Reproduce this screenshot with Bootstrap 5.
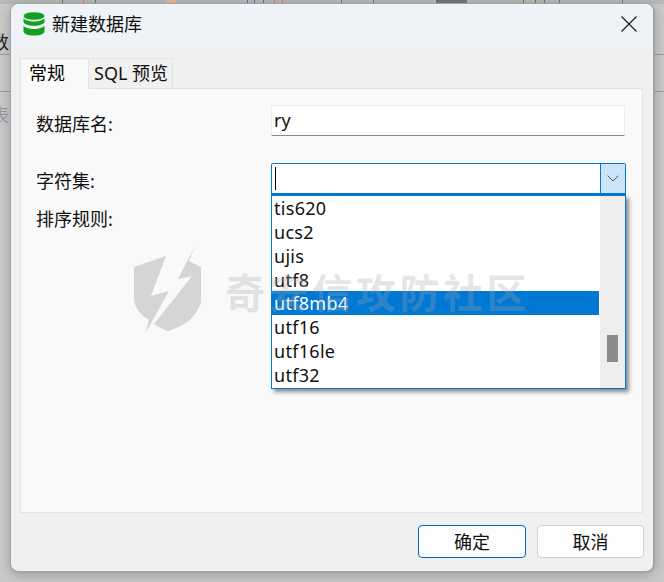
<!DOCTYPE html>
<html lang="zh-CN">
<head>
<meta charset="UTF-8" />
<meta name="viewport" content="width=device-width, initial-scale=1" />
<title>新建数据库</title>
<link href="https://cdn.jsdelivr.net/npm/bootstrap@5.3.0/dist/css/bootstrap.min.css" rel="stylesheet" />
<style>
html, body { height: 582px; overflow: hidden; }
body {
  width: 664px;
  background: #c9c9c9;
  font-family: "Noto Sans", "Noto Sans CJK SC", sans-serif;
  font-size: 18px;
  line-height: 24px;
  color: #111;
  position: relative;
}
/* what shows of the app behind the dialog */
.behind { position: absolute; inset: 0; overflow: hidden; }
.behind i { position: absolute; display: block; }
.behind .topband { left: 0; right: 0; top: 0; height: 4px; background: #b9b9b9; }
.behind .hline { height: 1px; background: #9b9b9b; }
.behind .tick { top: 0; width: 1px; height: 3px; }
.behind .ghost { font-style: normal; left: -9px; font-size: 18px; }

.dlg {
  position: relative;
  width: 645px;
  height: 570px;
  margin: 3px 0 0 10px;
  background: #f0f0f0;
  border: 1px solid #a3a3a3;
  border-width: 1px 2px 2px 1px;
  border-radius: 9px;
  box-shadow: 0 2px 12px rgba(0, 0, 0, .22);
  overflow: hidden;
}
.dlg-title { height: 42px; padding: 0 16px 0 12px; background: #eef3f8; }
.dlg-title svg { margin-top: -2px; }
.dlg-title .name { margin: -2px 0 0 7px; }
.dlg-close { margin-left: auto; line-height: 0; }

.tab-wrap { padding: 12px 10px 0 9px; }
.tab-strip { border: 0; height: 31px; }
.tab-strip .nav-link {
  height: 31px;
  padding: 2px 0 0 8px;
  color: #111;
  background: #f0f0f0;
  border: 1px solid #e3e3e3;
  border-radius: 0;
  margin: 0;
}
.tab-strip .nav-link.active {
  width: 69px;
  background: #f9f9f9;
  border-color: #e3e3e3;
  border-bottom-color: #f9f9f9;
  position: relative;
  z-index: 1;
}
.tab-strip .tab-second { width: 84px; padding-left: 5px; margin-left: 0; border-left: 0; }
.tab-pane-box {
  height: 425px;
  margin-top: -1px;
  padding: 16px 17px 0 15px;
  background: #f9f9f9;
  border: 1px solid #e3e3e3;
}
.form-line { display: flex; }
.form-line > label { width: 235px; flex: none; margin: 0; }
.line-name { height: 32px; }
.line-name > label { padding-top: 7px; }
.field { width: 354px; height: 31px; flex: none; }
.field.form-control {
  padding: 0 2px 1px;
  font-size: 18px;
  line-height: 28px;
  color: #111;
  background: #fff;
  border: 1px solid #ececec;
  border-bottom-color: #8a8a8a;
  border-radius: 2px 2px 0 0;
  box-shadow: none;
}
.combo {
  width: 355px;
  height: 32px;
  flex: none;
  background: #fff;
  border: 1px solid #0078d4;
  border-bottom-width: 2px;
  border-radius: 2px 2px 0 0;
}
.combo-caret { width: 1px; height: 23px; margin: 3px 0 0 3px; background: #000; }
.combo-btn {
  margin-left: auto;
  width: 25px;
  background: #cce4f7;
  border-left: 1px solid #0078d4;
}
.line-charset { margin-top: 26px; position: relative; }
.line-charset > label { padding-top: 6px; }
.line-sort { margin-top: 9px; }
.line-sort > label { padding-top: 3px; }

.charset-menu {
  position: absolute;
  top: 32px;
  left: 235px;
  width: 355px;
  height: 194px;
  background: #fff;
  border: 1px solid #0078d4;
  box-shadow: 3px 3px 4px rgba(0, 0, 0, .45);
  z-index: 5;
}
.charset-list { width: 327px; border-radius: 0; }
.charset-list .list-group-item {
  height: 24px;
  padding: 0 2px;
  line-height: 24px;
  font-size: 18px;
  letter-spacing: .3px;
  color: #111;
  background: transparent;
  border: 0;
}
.charset-list .list-group-item.active { background: #0078d4; color: #fff; }
.charset-bar { width: 26px; background: #eeeeee; border-left: 1px solid #fff; padding-top: 139px; }
.charset-thumb { width: 11px; height: 27px; margin-left: 7px; background: #8a8a8a; }

.dlg-foot { padding-top: 12px; padding-right: 9px; }
.foot-btn {
  width: 107px;
  height: 33px;
  padding: 0;
  font-size: 18px;
  line-height: 30px;
  color: #111;
  background: #fdfdfd;
  border: 1px solid #d0d0d0;
  border-radius: 4px;
}
.foot-btn.main { width: 108px; margin-right: 3px; border-color: #0067c0; }

.stamp {
  position: absolute;
  left: 122px;
  top: 239px;
  z-index: 9;
  pointer-events: none;
}
.stamp-text {
  margin: 3px 0 0 20px;
  font-family: "Noto Sans CJK SC", sans-serif;
  font-weight: 700;
  font-size: 40px;
  line-height: 44px;
  letter-spacing: 3.600px;
  color: rgba(165, 165, 165, .28);
  white-space: nowrap;
}
</style>
</head>
<body>
<div class="behind">
  <i class="topband"></i>
  <i class="hline" style="left:0;width:11px;top:54px"></i>
  <i class="hline" style="left:0;width:11px;top:91px"></i>
  <i class="hline" style="left:654px;width:10px;top:54px"></i>
  <i class="hline" style="left:654px;width:10px;top:91px"></i>
  <i class="tick" style="left:62px;background:#3f9a3f"></i>
  <i class="tick" style="left:83px;background:#e0785c"></i>
  <i class="tick" style="left:95px;background:#3f9a3f"></i>
  <i class="tick" style="left:167px;width:9px;background:#e8b9a0"></i>
  <i class="tick" style="left:247px;background:#3b78c8"></i>
  <i class="tick" style="left:254px;background:#3b78c8"></i>
  <i class="tick" style="left:263px;background:#3b78c8"></i>
  <i class="tick" style="left:274px;background:#e0785c"></i>
  <i class="tick" style="left:282px;background:#e0785c"></i>
  <i class="tick" style="left:341px;background:#777"></i>
  <i class="tick" style="left:373px;background:#777"></i>
  <i class="tick" style="left:436px;width:31px;background:#777"></i>
  <i class="tick" style="left:523px;background:#3f9a3f"></i>
  <i class="tick" style="left:535px;background:#3f9a3f"></i>
  <i class="tick" style="left:544px;background:#777"></i>
  <i class="tick" style="left:559px;background:#777"></i>
  <i class="tick" style="left:622px;background:#777"></i>
  <i class="ghost" style="top:30px;color:#222">数</i>
  <i class="ghost" style="top:103px;color:#8f9aa6">表</i>
</div>

<div class="dlg d-flex flex-column">
  <div class="dlg-title d-flex align-items-center">
    <svg width="22" height="24" viewBox="0 0 22 24" aria-hidden="true">
      <g fill="#13a01e">
        <ellipse cx="11" cy="4" rx="10.500" ry="3.800"/>
        <path d="M.5 6.200v3.600c0 2.200 4.700 4 10.500 4s10.500-1.800 10.500-4V6.200c-1.600 2-5.800 3.200-10.500 3.200S2.100 8.200.5 6.200z"/>
        <path d="M.5 13.800v5.700c0 2.300 4.700 4.100 10.500 4.100s10.500-1.800 10.500-4.100v-5.700c-1.600 2-5.800 3.200-10.500 3.200S2.100 15.800.5 13.800z"/>
      </g>
    </svg>
    <span class="name">新建数据库</span>
    <span class="dlg-close">
      <svg width="16" height="16" viewBox="0 0 16 16" aria-hidden="true"><path d="M.5.5l15 15M15.500.5l-15 15" stroke="#1a1a1a" stroke-width="1.200" fill="none"/></svg>
    </span>
  </div>

  <div class="tab-wrap">
    <ul class="nav nav-tabs tab-strip">
      <li class="nav-item"><a class="nav-link active" href="#">常规</a></li>
      <li class="nav-item"><a class="nav-link tab-second" href="#">SQL 预览</a></li>
    </ul>
    <div class="tab-pane-box">
      <div class="form-line line-name">
        <label>数据库名:</label>
        <input class="form-control field" type="text" value="ry" />
      </div>
      <div class="form-line line-charset">
        <label>字符集:</label>
        <div class="combo d-flex">
          <div class="combo-caret"></div>
          <div class="combo-btn d-flex align-items-center justify-content-center">
            <svg width="12" height="7" viewBox="0 0 12 7" aria-hidden="true"><path d="M.7.7L6 6l5.300-5.300" stroke="#555" stroke-width="1" fill="none"/></svg>
          </div>
        </div>
        <div class="charset-menu d-flex">
          <div class="list-group charset-list flex-grow-1">
            <div class="list-group-item">tis620</div>
            <div class="list-group-item">ucs2</div>
            <div class="list-group-item">ujis</div>
            <div class="list-group-item">utf8</div>
            <div class="list-group-item active">utf8mb4</div>
            <div class="list-group-item">utf16</div>
            <div class="list-group-item">utf16le</div>
            <div class="list-group-item">utf32</div>
          </div>
          <div class="charset-bar"><div class="charset-thumb"></div></div>
        </div>
      </div>
      <div class="form-line line-sort">
        <label>排序规则:</label>
      </div>
    </div>
  </div>

  <div class="dlg-foot d-flex justify-content-end gap-2">
    <button type="button" class="btn foot-btn main">确定</button>
    <button type="button" class="btn foot-btn">取消</button>
  </div>

  <div class="stamp d-flex align-items-center">
    <svg width="72" height="92" viewBox="0 0 72 92" aria-hidden="true">
      <g fill="#a8a8a8" fill-opacity=".45">
        <path d="M33 13L1 24V56Q2 69 16 77L12 91L36 48L18 53z"/>
        <path d="M62 3L45 36L59 33L21 81Q28 86 35 88Q62 80 68 59V24L56 18z"/>
      </g>
    </svg>
    <div class="stamp-text">奇安信攻防社区</div>
  </div>
</div>
</body>
</html>
